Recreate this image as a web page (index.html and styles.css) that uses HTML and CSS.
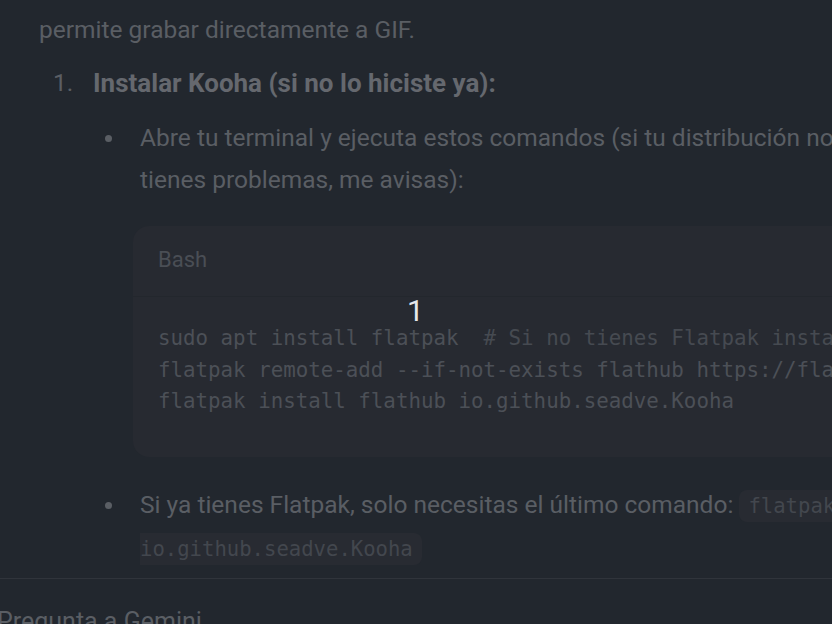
FILE: index.html
```html
<!DOCTYPE html>
<html lang="es">
<head>
<meta charset="utf-8">
<title>Gemini</title>
<link rel="stylesheet" href="styles.css">
</head>
<body>
<div class="page">
  <main class="chat">
    <p class="para cut">Es muy útil y sencilla de usar, además también</p>
    <p class="para">permite grabar directamente a GIF.</p>
    <ol class="steps">
      <li class="step">
        <span class="num">1.</span>
        <div class="step-body">
          <strong class="step-title">Instalar Kooha (si no lo hiciste ya):</strong>
          <ul class="bullets">
            <li class="bullet">
              <span class="dot"></span>
              <div class="bullet-body">
                <p class="line nowrap">Abre tu terminal y ejecuta estos comandos (si tu distribución no lo trae o si<br>tienes problemas, me avisas):</p>
                <div class="code">
                  <div class="code-head">Bash</div>
                  <pre class="code-body">sudo apt install flatpak  <span class="cm"># Si no tienes Flatpak instalado</span>
flatpak remote-add --if-not-exists flathub https://flathub.org/repo/flathub.flatpakrepo
flatpak install flathub io.github.seadve.Kooha</pre>
                </div>
              </div>
            </li>
            <li class="bullet">
              <span class="dot"></span>
              <div class="bullet-body">
                <p class="line nowrap">Si ya tienes Flatpak, solo necesitas el último comando: <code class="inline">flatpak install flathub<br>io.github.seadve.Kooha</code></p>
              </div>
            </li>
          </ul>
        </div>
      </li>
    </ol>
  </main>
  <footer class="composer">
    <div class="prompt">Pregunta a Gemini</div>
  </footer>
</div>
<div class="countdown">1</div>
</body>
</html>
```

FILE: styles.css
```css
html, body {
  margin: 0;
  padding: 0;
}
body {
  width: 832px;
  height: 624px;
  overflow: hidden;
  background: #22272e;
  font-family: Roboto, "Noto Sans", sans-serif;
  color: #5a5e64;
  position: relative;
}
.page {
  display: flex;
  flex-direction: column;
  width: 1400px;
}
.chat {
  padding-left: 39px;
}
.para {
  margin: 0;
  font-size: 24.5px;
  line-height: 42px;
  white-space: nowrap;
}
.cut {
  margin-top: -35px;
  margin-bottom: 2px;
}
.steps {
  list-style: none;
  margin: 11px 0 0 0;
  padding: 0;
}
.step {
  display: flex;
}
.num {
  width: 54px;
  box-sizing: border-box;
  padding-left: 14px;
  font-size: 24.5px;
  line-height: 42px;
}
.step-body {
  display: flex;
  flex-direction: column;
}
.step-title {
  font-size: 26px;
  line-height: 42px;
  font-weight: 700;
  color: #65686e;
}
.bullets {
  list-style: none;
  margin: 13px 0 0 0;
  padding: 0;
  display: flex;
  flex-direction: column;
  gap: 27px;
}
.bullet {
  display: flex;
}
.dot {
  width: 7px;
  height: 7px;
  border-radius: 50%;
  background: #5a5e64;
  margin: 18px 28px 0 12px;
  flex: none;
}
.bullet-body {
  display: flex;
  flex-direction: column;
}
.line {
  margin: 0;
  font-size: 24.5px;
  line-height: 42px;
}
.nowrap {
  white-space: nowrap;
}
.code {
  margin: 25px 0 0 -7px;
  width: 1100px;
  background: #272a31;
  border-radius: 16px;
  overflow: hidden;
}
.code-head {
  height: 71px;
  box-sizing: border-box;
  padding: 20px 0 0 25px;
  font-size: 22px;
  line-height: 28px;
  color: #4a4e55;
  border-bottom: 1px solid #23272d;
}
.code-body {
  margin: 0;
  padding: 26px 0 39px 25px;
  font-family: "DejaVu Sans Mono", "Liberation Mono", monospace;
  font-size: 20.8px;
  line-height: 31.6px;
  color: #4c5057;
  white-space: pre;
}
.cm {
  color: #464a51;
}
.inline {
  font-family: "DejaVu Sans Mono", "Liberation Mono", monospace;
  font-size: 20.6px;
  color: #43474e;
  background: #282b32;
  border-radius: 8px;
  padding: 4px 9px;
  -webkit-box-decoration-break: slice;
  box-decoration-break: slice;
}
.composer {
  margin-top: 8px;
  border-top: 1px solid #30343b;
  height: 60px;
}
.prompt {
  margin: 28px 0 0 -3px;
  font-size: 25px;
  line-height: 30px;
  color: #5a5e64;
}
.countdown {
  position: absolute;
  left: 407px;
  top: 294px;
  font-family: Roboto, "Noto Sans", sans-serif;
  font-size: 30px;
  line-height: 34px;
  color: #e6e8ec;
}
```
